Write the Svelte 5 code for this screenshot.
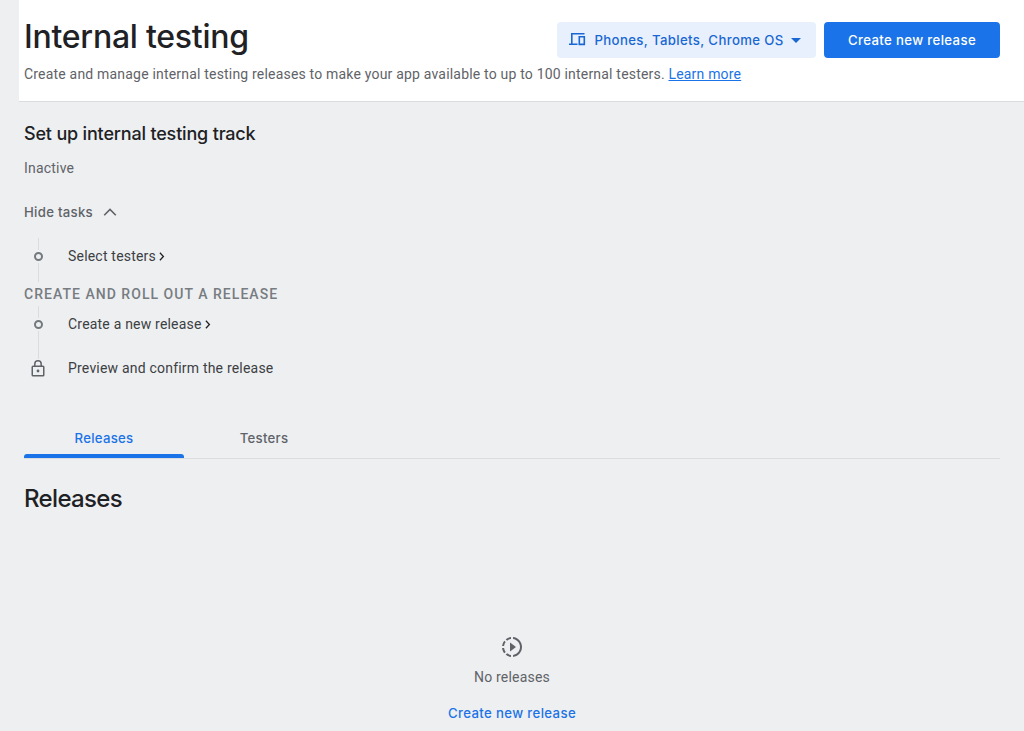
<script>
  const tabs = ['Releases', 'Testers'];
</script>

<main>
  <header>
    <div class="intro">
      <h1>Internal testing</h1>
      <p>Create and manage internal testing releases to make your app available to up to 100 internal testers. <a href="#learn">Learn more</a></p>
    </div>
    <div class="actions">
      <button class="devices">
        <svg width="17" height="13" viewBox="0 0 17 13" fill="none" stroke="currentColor" stroke-width="1.6"><path d="M2.8 10.5V.8H15.5M0 11.2h8.5" /><path d="M10.3 3.8h5v7.6h-5z" /></svg>
        <span>Phones, Tablets, Chrome OS</span>
        <svg class="arrow" width="10" height="5" viewBox="0 0 10 5" fill="currentColor"><path d="M0 0h10L5 5z" /></svg>
      </button>
      <button class="primary"><span>Create new release</span></button>
    </div>
  </header>

  <section class="setup">
    <h2>Set up internal testing track</h2>
    <p class="status">Inactive</p>
    <button class="toggle">
      <span>Hide tasks</span>
      <svg width="14" height="8" viewBox="0 0 14 8" fill="none" stroke="currentColor" stroke-width="1.6"><path d="M1.2 7.2 7 1.4l5.8 5.8" /></svg>
    </button>
    <div class="task">
      <div class="rail"><i></i><b></b><i></i></div>
      <span>Select testers</span>
      <svg class="chev" width="6" height="9" viewBox="0 0 6 9" fill="none" stroke="currentColor" stroke-width="1.3"><path d="m.9 .8 3.5 3.7L.9 8.2" /></svg>
    </div>
    <h3>Create and roll out a release</h3>
    <div class="task">
      <div class="rail joined"><i></i><b></b><i></i></div>
      <span>Create a new release</span>
      <svg class="chev" width="6" height="9" viewBox="0 0 6 9" fill="none" stroke="currentColor" stroke-width="1.3"><path d="m.9 .8 3.5 3.7L.9 8.2" /></svg>
    </div>
    <div class="task">
      <div class="rail last"><svg width="14" height="17" viewBox="0 0 14 17" fill="none" stroke="currentColor" stroke-width="1.5"><rect x="1.25" y="6.25" width="11.5" height="9.5" rx=".8" /><path d="M3.8 6V4a3.2 3.2 0 0 1 6.4 0v2" /><circle cx="7" cy="11" r="1.4" fill="currentColor" stroke="none" /></svg></div>
      <span>Preview and confirm the release</span>
    </div>
  </section>

  <nav>
    {#each tabs as tab, i}
      <button class:active={i === 0}><span>{tab}</span></button>
    {/each}
  </nav>

  <h2 class="releases">Releases</h2>
  <section class="empty">
    <svg width="24" height="24" viewBox="0 0 24 24" fill="currentColor"><path d="M13.05 9.79L10 7.5v9l3.05-2.29L16 12zM11 4.07V2.05c-2.01.2-3.84 1-5.32 2.21L7.1 5.69A7.94 7.94 0 0 1 11 4.07zM5.69 7.1L4.26 5.68A9.95 9.95 0 0 0 2.05 11h2.02c.18-1.46.76-2.79 1.62-3.9zM4.07 13H2.05c.2 2.01 1 3.84 2.21 5.32l1.43-1.43A7.87 7.87 0 0 1 4.07 13zm1.61 6.74A9.98 9.98 0 0 0 11 21.95v-2.02a7.94 7.94 0 0 1-3.9-1.62l-1.42 1.43zM22 12c0 5.16-3.92 9.42-8.95 9.95v-2.02C16.97 19.41 20 16.05 20 12s-3.03-7.41-6.95-7.93V2.05C18.08 2.58 22 6.84 22 12z" /></svg>
    <p>No releases</p>
    <button>Create new release</button>
  </section>
</main>

<style>
  :global(body) { background: #eeeff1; }
  main { height: 731px; overflow: hidden; background: #eeeff1; color: #202124; font: 14px/20px Roboto, sans-serif; }
  h1, h2, h3, p { margin: 0; }
  button { border: 0; padding: 0; background: none; color: inherit; display: flex; align-items: center; justify-content: center; white-space: nowrap; font: 550 13.2px/20px Inter, sans-serif; letter-spacing: .36px; }
  svg { display: block; flex: none; }
  header { display: flex; justify-content: space-between; height: 101px; margin-left: 19px; padding: 0 24px 0 5px; background: #fff; border-bottom: 1px solid #dadce0; box-sizing: content-box; }
  .intro { width: 0; padding-top: 17px; white-space: nowrap; }
  h1 { font: 450 32px/40px Inter, sans-serif; letter-spacing: -.25px; }
  .intro p { margin-top: 7px; color: #5f6368; letter-spacing: .192px; }
  a { color: #1a73e8; }
  .actions { display: flex; gap: 8px; padding-top: 22px; }
  .actions button { height: 36px; border-radius: 4px; box-sizing: border-box; }
  .devices { width: 259px; justify-content: flex-start; padding-left: 12px; background: #e8f0fe; color: #1967d2; }
  .devices span { width: 190px; margin-left: 8.5px; letter-spacing: .36px; text-align: left; }
  .devices svg:first-child { margin-top: -2px; }
  .devices .arrow { margin-left: 6.5px; margin-top: 1px; }
  .primary { width: 176px; background: #1a73e8; color: #fff; }
  .setup { padding: 20px 24px 0; }
  h2 { font: 500 18px/24px Inter, sans-serif; letter-spacing: -.18px; }
  .status { margin-top: 12px; color: #5f6368; letter-spacing: .2px; }
  .toggle { margin-top: 24px; gap: 10px; color: #5f6368; letter-spacing: .28px; }
  .task { display: flex; align-items: center; height: 44px; color: #3c4043; letter-spacing: .2px; }
  .toggle + .task { margin-top: 12px; }
  .rail { width: 29px; height: 44px; margin-right: 15px; display: flex; flex-direction: column; align-items: center; color: #5f6368; }
  .rail i { width: 1px; flex: 0 0 12px; margin-top: 4px; background: #dadce0; }
  .rail i:last-child { flex-basis: 19px; margin-top: 0; }
  .joined i:last-child { flex-basis: 28px; flex-shrink: 0; }
  .rail b { box-sizing: border-box; flex: none; width: 9px; height: 9px; margin: 2px 0; border: 2px solid #74797e; border-radius: 50%; }
  .last svg { margin: 14px 1px 0 0; }
  .chev { margin-left: 3px; margin-top: 1px; color: #202124; }
  h3 { position: relative; top: 2px; margin: 2px 0 -2px; font: 500 14px/24px Roboto, sans-serif; letter-spacing: 1.03px; color: #777c81; text-transform: uppercase; }
  nav { display: flex; height: 40px; margin: 28px 24px 0; border-bottom: 1px solid #dadce0; }
  nav button { position: relative; width: 160px; color: #5f6368; letter-spacing: .26px; }
  nav .active { color: #1a73e8; }
  nav .active::after { content: ''; position: absolute; left: 0; right: 0; bottom: 0; height: 4px; border-radius: 3px 3px 0 0; background: #1a73e8; }
  .releases { margin: 24px 24px 0; font: 450 24px/32px Inter, sans-serif; letter-spacing: -.65px; }
  .empty { display: flex; flex-direction: column; align-items: center; padding-top: 120px; color: #5f6368; }
  .empty p { margin: 8px 0 16px; letter-spacing: .2px; }
  .empty button { color: #1a73e8; }
</style>
